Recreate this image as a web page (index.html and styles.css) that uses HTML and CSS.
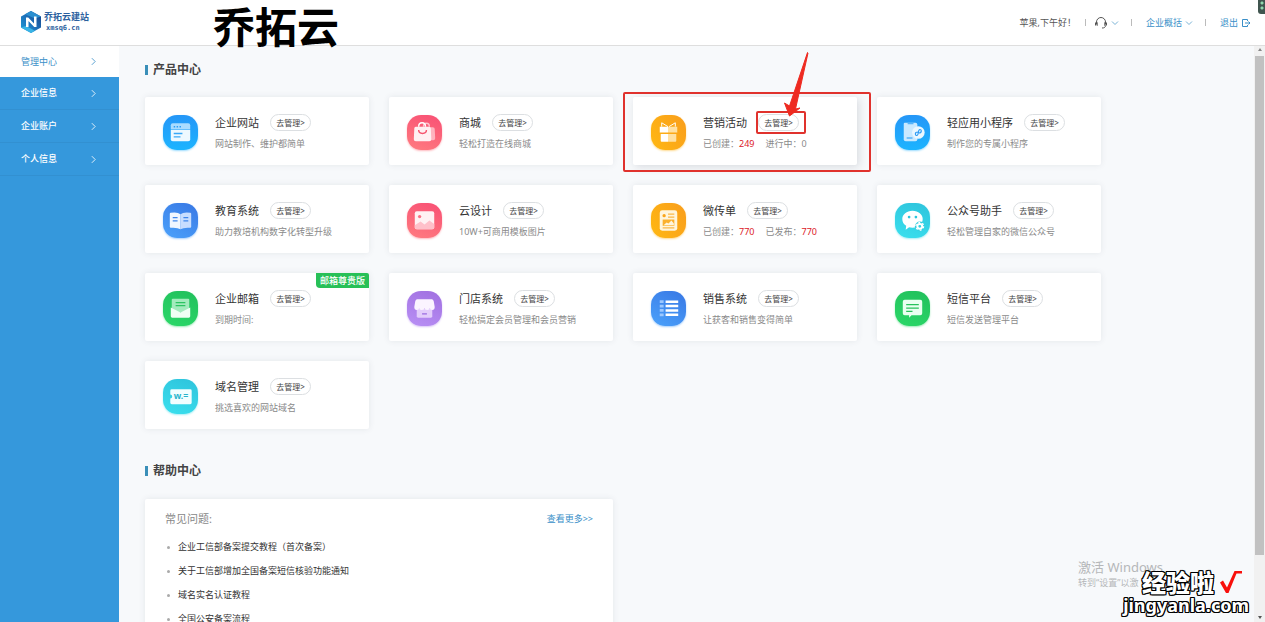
FILE: index.html
```html
<!DOCTYPE html>
<html lang="zh-CN">
<head>
<meta charset="utf-8">
<meta name="viewport" content="width=device-width, initial-scale=1">
<title>乔拓云建站</title>
<link rel="stylesheet" href="styles.css">
</head>
<body>
<header class="topbar">
  <div class="logo">
    <svg class="logo-mark" viewBox="0 0 22 24" aria-hidden="true">
      <defs><linearGradient id="lg" x1="0" y1="1" x2="1" y2="0"><stop offset="0" stop-color="#1fa0dc"/><stop offset=".5" stop-color="#1d6fb8"/><stop offset="1" stop-color="#163f86"/></linearGradient></defs>
      <path d="M11 1 21 6.500v11L11 23 1 17.500v-11z" fill="url(#lg)"/>
      <path d="M11 1 21 6.500l-6 2L5 4.300z" fill="#2b8fd0"/>
      <path d="M1 17.500 11 23l4-2.200-9-4.800z" fill="#39b4e6"/>
      <path d="M6 17V7.500h2.200l5.800 6V6.500h2.500V17h-2.300l-5.700-6v6z" fill="#fff"/>
    </svg>
    <div class="logo-words"><span class="logo-name">乔拓云建站</span><span class="logo-host">xmsq6.cn</span></div>
  </div>
  <h1 class="brand">乔拓云</h1>
  <nav class="tools">
    <span class="hello">苹果,下午好！</span>
    <i class="bar"></i>
    <button class="tool" type="button" aria-label="客服">
      <svg class="headset" viewBox="0 0 14 14" fill="none" stroke="#555"><path d="M2.500 8.500V6a4.500 4.500 0 0 1 9 0v2.500M11.500 9.500c0 2-1.500 2.500-3.500 2.500"/><path d="M1.500 6.500v3M3.200 6.300v3.500M12.500 6.500v3M10.800 6.300v3.500"/></svg>
      <svg class="chev" viewBox="0 0 8 8"><path d="M1 2.500 4 5.500 7 2.500"/></svg>
    </button>
    <i class="bar"></i>
    <button class="tool link" type="button">企业概括 <svg class="chev" viewBox="0 0 8 8"><path d="M1 2.500 4 5.500 7 2.500"/></svg></button>
    <i class="bar"></i>
    <a class="tool link" href="#">退出 <svg class="exit" viewBox="0 0 10 10"><path d="M6.500 3V1.500h-5v7h5V7M4 5h5M7.500 3.500 9 5 7.500 6.500"/></svg></a>
  </nav>
  <div class="dock" aria-hidden="true"></div>
</header>

<div class="body">
  <nav class="side">
    <a class="side-item active" href="#">管理中心<svg class="arrow" viewBox="0 0 6 10"><path d="M1 1 5 5 1 9"/></svg></a>
    <a class="side-item" href="#">企业信息<svg class="arrow" viewBox="0 0 6 10"><path d="M1 1 5 5 1 9"/></svg></a>
    <a class="side-item" href="#">企业账户<svg class="arrow" viewBox="0 0 6 10"><path d="M1 1 5 5 1 9"/></svg></a>
    <a class="side-item" href="#">个人信息<svg class="arrow" viewBox="0 0 6 10"><path d="M1 1 5 5 1 9"/></svg></a>
  </nav>

  <main class="main">
    <h2 class="section-title">产品中心</h2>
    <div class="grid">
      <article class="card">
        <svg class="icon azure" viewBox="0 0 36 36"><path d="M10 8.500h16a2 2 0 0 1 2 2V15H8v-4.500a2 2 0 0 1 2-2z" fill="#a9dcff"/><path d="M8 15.500h20V25a2 2 0 0 1-2 2H10a2 2 0 0 1-2-2z" fill="#eef9ff"/><path d="M11 12h1.500m1.500 0h1.500m1.500 0h1.500" stroke="#2c9df5" stroke-width="1.500"/><path d="M11 19h9M11 22.500h7" stroke="#3aa9f7" stroke-width="1.400"/></svg>
        <div class="info"><div class="row"><h3>企业网站</h3><button class="go" type="button">去管理&gt;</button></div><p>网站制作、维护都简单</p></div>
      </article>
      <article class="card">
        <svg class="icon rose" viewBox="0 0 36 36"><path d="M16 12.500h10.500q2 0 2 2l.500 9.500q0 2-2 2H16z" fill="#ffb3bf"/><path d="M17 12q0-3.500 3-3.500t3 3.500" fill="none" stroke="#ffc5ce" stroke-width="1.500"/><path d="M9 12h13.500q2 0 2 2l.500 11q0 2-2 2H9q-2 0-2-2l.500-11q0-2 1.500-2z" fill="#fff0f2"/><path d="M12 12q0-4 3.500-4T19 12" fill="none" stroke="#fff" stroke-width="1.500"/><path d="M12 15.500q0 3.500 4 3.500t4-3.500" fill="none" stroke="#f6556f" stroke-width="1.500"/></svg>
        <div class="info"><div class="row"><h3>商城</h3><button class="go" type="button">去管理&gt;</button></div><p>轻松打造在线商城</p></div>
      </article>
      <article class="card marked">
        <svg class="icon amber" viewBox="0 0 36 36"><path d="M17.500 12 11 8v4M18.500 12 25 8v4" fill="none" stroke="#fff" stroke-width="1"/><path d="M9 12h8.500v6H9zM10 19.500h7.500v8H11q-1 0-1-1z" fill="#fff"/><path d="M17.500 12H27v6h-9.500zM17.500 19.500H26v7q0 1-1 1h-7.500z" fill="#ffe1a3"/></svg>
        <div class="info"><div class="row"><h3>营销活动</h3><button class="go" type="button">去管理&gt;</button></div><p><span>已创建：<b>249</b></span><span>进行中：0</span></p></div>
        <svg class="mark" viewBox="0 0 250 122" aria-hidden="true">
          <g fill="none" stroke="#e0322d" stroke-width="2"><rect x="2" y="42" width="246" height="78" rx="1"/><rect x="135" y="61" width="48" height="21" rx="1"/></g>
          <path d="M185.500 1.500 186 2l-12.500 56 4.500-1-10.500 8-5-13 5 3z" fill="#ee2a20" stroke="#ee2a20" stroke-linejoin="round"/>
        </svg>
      </article>
      <article class="card">
        <svg class="icon azure" viewBox="0 0 36 36"><path d="M9 9q0-1 1-1h11q2 0 2 2v15q0 2-2 2H11q-2 0-2-2z" fill="#c9e9ff"/><path d="M13 8h6v1.500h-6zM12 23h6v1.500h-6z" fill="#55b4fa"/><circle cx="24" cy="18" r="6.500" fill="#eaf7ff"/><path d="M23.500 17.500c-3.500 0-3 4-.8 3.500 2-.5.600-5.500 2.600-6 2.200-.5 2.700 3.500-.800 3.500" fill="none" stroke="#2f9df5" stroke-width="1.200"/></svg>
        <div class="info"><div class="row"><h3>轻应用小程序</h3><button class="go" type="button">去管理&gt;</button></div><p>制作您的专属小程序</p></div>
      </article>
      <article class="card">
        <svg class="icon blue" viewBox="0 0 36 36"><path d="M8 10q7-1 10 1.500V27q-3-2-10-1.500-1 0-1-1V11q0-1 1-1z" fill="#f0f6ff"/><path d="M28 10q-7-1-10 1.500V27q3-2 10-1.500 1 0 1-1V11q0-1-1-1z" fill="#c7ddff"/><path d="M10 15h5M10 18.500h5M21 15h5M21 18.500h5" stroke="#3f86ec" stroke-width="1.300"/></svg>
        <div class="info"><div class="row"><h3>教育系统</h3><button class="go" type="button">去管理&gt;</button></div><p>助力教培机构数字化转型升级</p></div>
      </article>
      <article class="card">
        <svg class="icon rose" viewBox="0 0 36 36"><rect x="8" y="8.500" width="20" height="18.500" rx="2" fill="#fff1f3"/><circle cx="13" cy="14" r="1.700" fill="#fa7085"/><path d="m8 23 6-4 4 3 5-4 5 3.500V25q0 2-2 2H10q-2 0-2-2z" fill="#ffc0ca"/></svg>
        <div class="info"><div class="row"><h3>云设计</h3><button class="go" type="button">去管理&gt;</button></div><p>10W+可商用模板图片</p></div>
      </article>
      <article class="card">
        <svg class="icon amber" viewBox="0 0 36 36"><rect x="9" y="7.500" width="18" height="21" rx="2.500" fill="#fff5dd"/><circle cx="13.500" cy="13" r="1.700" fill="#fba51a"/><path d="M17.500 11.500H24M17.500 14.500H24M12 25.500h12" stroke="#fbb848" stroke-width="1.200"/><rect x="12" y="17" width="12" height="6.500" fill="#fbb02d"/><path d="m13 23 3-3 2 1 3-3 2.500 3v2z" fill="#fff5dd"/></svg>
        <div class="info"><div class="row"><h3>微传单</h3><button class="go" type="button">去管理&gt;</button></div><p><span>已创建：<b>770</b></span><span>已发布：<b>770</b></span></p></div>
      </article>
      <article class="card">
        <svg class="icon cyan" viewBox="0 0 36 36"><path d="M18 8c6 0 10.500 3.800 10.500 8.500S24 25.500 18 25.500q-2 0-3.500-.5L11 27.500l.5-4Q7.500 21 7.500 16.500C7.500 11.800 12 8 18 8z" fill="#fff"/><circle cx="14.500" cy="14.500" r="1.400" fill="#2cc6dc"/><circle cx="21.500" cy="14.500" r="1.400" fill="#2cc6dc"/><circle cx="25.500" cy="24" r="5" fill="#34cfe0"/><circle cx="25.500" cy="24" r="2.500" fill="none" stroke="#fff" stroke-width="2"/><circle cx="25.500" cy="24" r="4" fill="none" stroke="#fff" stroke-width="1.200" stroke-dasharray="2 2.200"/></svg>
        <div class="info"><div class="row"><h3>公众号助手</h3><button class="go" type="button">去管理&gt;</button></div><p>轻松管理自家的微信公众号</p></div>
      </article>
      <article class="card">
        <svg class="icon green" viewBox="0 0 36 36"><path d="M10 8h16q1 0 1 1v13H9V9q0-1 1-1z" fill="#a3ebbd"/><path d="M13 12h10M13 15h10" stroke="#2cc462" stroke-width="1.300"/><path d="m8 17 10 5 10-5v9q0 1.500-1.500 1.500h-17Q8 27.500 8 26z" fill="#effff4"/></svg>
        <div class="info"><div class="row"><h3>企业邮箱</h3><button class="go" type="button">去管理&gt;</button></div><p>到期时间:</p></div>
        <span class="ribbon">邮箱尊贵版</span>
      </article>
      <article class="card">
        <svg class="icon violet" viewBox="0 0 36 36"><path d="M10 18h16v8q0 1.500-1.500 1.500h-13Q10 27.500 10 26z" fill="#e3cdfb"/><path d="M10.500 8.500h15q1.500 0 2 2l1 6q0 3-2.500 3t-2.500-2q0 2-2.700 2t-2.800-2q0 2-2.800 2t-2.700-2q0 2-2.500 2t-2.500-3l1-6q.5-2 2-2z" fill="#fbf4ff"/><path d="M15.500 23.500h5" stroke="#9b6be0" stroke-width="1.300"/></svg>
        <div class="info"><div class="row"><h3>门店系统</h3><button class="go" type="button">去管理&gt;</button></div><p>轻松搞定会员管理和会员营销</p></div>
      </article>
      <article class="card">
        <svg class="icon blue" viewBox="0 0 36 36"><path d="M15 11h13M15 15.500h13M15 20h13M15 24.500h13" stroke="#fff" stroke-width="2.600"/><path d="M9 11h4M9 15.500h4M9 20h4M9 24.500h4" stroke="#9cc8ff" stroke-width="2.800"/></svg>
        <div class="info"><div class="row"><h3>销售系统</h3><button class="go" type="button">去管理&gt;</button></div><p>让获客和销售变得简单</p></div>
      </article>
      <article class="card">
        <svg class="icon green" viewBox="0 0 36 36"><path d="M10 9h16q2 0 2 2v12q0 2-2 2h-9l-2.500 2.500V25H10q-2 0-2-2V11q0-2 2-2z" fill="#e9fff0"/><path d="M11.500 14h13M11.500 17.500h13M11.500 21H18" stroke="#27c25b" stroke-width="1.300"/></svg>
        <div class="info"><div class="row"><h3>短信平台</h3><button class="go" type="button">去管理&gt;</button></div><p>短信发送管理平台</p></div>
      </article>
      <article class="card">
        <svg class="icon cyan" viewBox="0 0 36 36"><path d="M9 10.500h19q1.500 0 1.500 1.500v12.500q0 1.500-1.500 1.500H9q-1.500 0-1.500-1.500V20a2 2 0 0 0 0-4v-4q0-1.500 1.500-1.500z" fill="#f1feff"/><text class="www" x="11" y="21">w.=</text></svg>
        <div class="info"><div class="row"><h3>域名管理</h3><button class="go" type="button">去管理&gt;</button></div><p>挑选喜欢的网站域名</p></div>
      </article>
    </div>

    <h2 class="section-title">帮助中心</h2>
    <section class="help">
      <div class="help-head"><h3>常见问题:</h3><a class="more" href="#">查看更多&gt;&gt;</a></div>
      <ul class="faq">
        <li><a href="#">企业工信部备案提交教程（首次备案）</a></li>
        <li><a href="#">关于工信部增加全国备案短信核验功能通知</a></li>
        <li><a href="#">域名实名认证教程</a></li>
        <li><a href="#">全国公安备案流程</a></li>
      </ul>
    </section>
  </main>

  <div class="scroll" aria-hidden="true"><i class="up"></i><i class="thumb"></i><i class="down"></i></div>
</div>

<div class="activate"><p class="act-title">激活 Windows</p><p class="act-text">转到“设置”以激</p></div>
<div class="stamp">
  <div class="stamp-top"><span class="stamp-name">经验啦</span><svg class="tick" viewBox="0 0 24 24"><path d="M1 12.500 4 10.500 8 17.500 15.500 1H23v2.500h-5.500L9.500 23H7z" fill="#f8100c"/></svg></div>
  <span class="stamp-host">jingyanla.com</span>
</div>
</body>
</html>
```
FILE: styles.css
```css
* { box-sizing: border-box; }

body {
  margin: 0;
  height: 100vh;
  display: flex;
  flex-direction: column;
  overflow: hidden;
  background: #f7f9fb;
  color: #444;
  font: 9px/14px "Noto Sans", "Noto Sans CJK SC", sans-serif;
}

h1, h2, h3, p, ul { margin: 0; padding: 0; font-weight: 400; }
a { color: inherit; text-decoration: none; }
button { font: inherit; color: inherit; background: none; border: 0; padding: 0; cursor: pointer; }
svg { flex: none; display: block; }

/* top bar */
.topbar {
  position: relative;
  flex: none;
  display: flex;
  align-items: center;
  height: 46px;
  padding: 0 13px 0 20px;
  background: #fff;
  border-bottom: 1px solid #dedede;
}
.logo { display: flex; align-items: center; gap: 2px; width: 193px; padding-bottom: 2px; }
.logo-mark { width: 22px; height: 24px; }
.logo-words { display: flex; flex-direction: column; color: #2b5f9e; font-weight: 700; }
.logo-name { font-size: 9px; line-height: 12px; }
.logo-host { padding-left: 2px; font: 700 7px/10px "DejaVu Sans Mono", monospace; }
.brand {
  color: #000;
  font: 700 42px/46px "Noto Sans CJK SC", sans-serif;
  padding-top: 4px;
}
.tools { display: flex; align-items: center; margin-left: auto; padding-right: 1px; color: #555; }
.tool { display: flex; align-items: center; gap: 3px; }
.link { color: #3a8fc8; }
.bar { width: 1px; height: 7px; margin: 0 14px 0 12px; background: #bbb; }
.bar:nth-of-type(1) { margin: 0 8px 0 9px; }
.headset { width: 14px; height: 14px; }
.chev { width: 8px; height: 8px; fill: none; stroke: #7ab3d6; }
.exit { width: 10px; height: 10px; fill: none; stroke: #3a8fc8; }
.dock {
  position: absolute;
  top: 0;
  right: 0;
  width: 7px;
  height: 14px;
  border-radius: 0 0 0 3px;
  background: radial-gradient(circle at 4px 3px, #8fd6ac 1px, transparent 2px), radial-gradient(circle at 4px 8px, #8fd6ac 1px, transparent 2px), #40554f;
}

/* frame */
.body { flex: 1; min-height: 0; display: flex; }
.side { flex: none; width: 119px; background: #3598dc; color: #fff; }
.side-item {
  display: flex;
  align-items: center;
  justify-content: space-between;
  height: 33px;
  padding: 0 23px 0 21px;
  border-bottom: 1px solid #3290d1;
  font-weight: 500;
}
.side-item.active { height: 31px; background: #fff; color: #3a8fc8; border: 0; font-weight: 400; }
.arrow { width: 5px; height: 9px; fill: none; stroke: currentColor; stroke-width: 1; }

.main { flex: 1; min-width: 0; overflow: hidden; padding: 16px 0 0 26px; }
.section-title {
  display: flex;
  align-items: center;
  gap: 5px;
  color: #444;
  font-size: 12px;
  line-height: 16px;
  font-weight: 700;
}
.section-title::before { content: ""; width: 3px; height: 10px; background: #3a8fb8; }

/* product cards */
.grid {
  display: grid;
  grid-template-columns: repeat(auto-fill, 224px);
  gap: 20px;
  margin: 19px 0 33px;
}
.card {
  position: relative;
  display: flex;
  align-items: center;
  gap: 17px;
  padding: 17px 18px 14px;
  background: #fff;
  border-radius: 2px;
  box-shadow: 0 0 6px rgba(60, 70, 90, .1);
}
.marked { box-shadow: 2px 2px 8px rgba(60, 70, 90, .16); }
.icon { width: 35px; height: 35px; border-radius: 14px; }
.azure { background: linear-gradient(#2596f7, #1cb4ff); box-shadow: 0 1px 2px #9bdcff; }
.rose { background: linear-gradient(20deg, #ff7c80, #f84f74); box-shadow: 0 1px 2px #ffb9bf; }
.amber { background: linear-gradient(60deg, #ffb812, #f99d1c); box-shadow: 0 1px 2px #ffdb91; }
.blue { background: linear-gradient(30deg, #4ba2fb, #3877e4); box-shadow: 0 1px 2px #a6cffc; }
.cyan { background: linear-gradient(20deg, #3ae0ee, #2ec3dc); box-shadow: 0 1px 2px #a5eef5; }
.green { background: linear-gradient(20deg, #2bd868, #21bf5c); box-shadow: 0 1px 2px #9deab8; }
.violet { background: linear-gradient(20deg, #b990f5, #a06fe0); box-shadow: 0 1px 2px #dac4f8; }
.www { font: 700 9px "Noto Sans", sans-serif; fill: #27b4cc; }
.info { min-width: 0; white-space: nowrap; }
.row { display: flex; align-items: center; gap: 11px; margin-bottom: 6px; }
.row h3 { color: #333; font-size: 11px; line-height: 17px; }
.go {
  width: 41px;
  height: 17px;
  border: 1px solid #dcdfe2;
  border-radius: 9px;
  color: #444;
  font-size: 8px;
  line-height: 14px;
  background: #fff;
}
.info p { display: flex; gap: 11px; color: #8a8a8a; }
.info b { color: #dc2028; font-weight: 400; }
.ribbon {
  position: absolute;
  top: 0;
  right: 0;
  padding: 1px 4px 0;
  border-radius: 0 2px 0 4px;
  background: #27c057;
  color: #fff;
  font-weight: 500;
}
.mark { position: absolute; z-index: 2; top: -46px; left: -11px; width: 250px; height: 122px; pointer-events: none; }

/* help */
.help {
  width: 468px;
  max-width: 100%;
  margin-top: 20px;
  padding: 12px 20px 20px;
  background: #fff;
  border-radius: 2px;
  box-shadow: 0 0 6px rgba(60, 70, 90, .1);
}
.grid + .section-title { margin-top: 34px; }
.help-head { display: flex; justify-content: space-between; align-items: center; }
.help-head h3 { color: #888; font-size: 11px; line-height: 16px; }
.more { color: #3a8fc8; }
.faq { list-style: none; padding-top: 8px; }
.faq li { display: flex; align-items: center; gap: 8px; padding-left: 2px; line-height: 24px; color: #333; }
.faq li::before { content: ""; width: 3px; height: 3px; border-radius: 50%; background: #aaa; }

/* scrollbar */
.scroll { flex: none; width: 11px; display: flex; flex-direction: column; align-items: center; background: #f1f1f1; }
.thumb { flex: 1; width: 9px; margin: 5px 0 61px; background: #c1c1c1; }
.up, .down { width: 0; height: 0; border: 2px solid transparent; }
.up { margin-top: 2px; border-bottom: 3px solid #888; border-top: 0; }
.down { margin-bottom: 3px; border-top: 3px solid #555; border-bottom: 0; }

/* overlays */
.activate { position: absolute; right: 102px; bottom: 32px; color: #b5b7b9; white-space: nowrap; }
.act-title { font-size: 13px; line-height: 16px; }
.act-text { line-height: 15px; }
.stamp {
  position: absolute;
  right: 16px;
  bottom: 7px;
  display: flex;
  flex-direction: column;
  align-items: flex-end;
  color: #fff;
  text-shadow: 1px 0 #000, -1px 0 #000, 0 1px #000, 0 -1px #000, 1px 1px #000, -1px -1px #000, 1px -1px #000, -1px 1px #000;
}
.stamp-top { display: flex; align-items: center; gap: 5px; padding-right: 6px; }
.stamp-name { font: 900 24px/26px "Noto Sans CJK SC", sans-serif; }
.tick { width: 24px; height: 24px; }
.stamp-host { font: 700 18px/20px "Noto Sans", sans-serif; }
```
